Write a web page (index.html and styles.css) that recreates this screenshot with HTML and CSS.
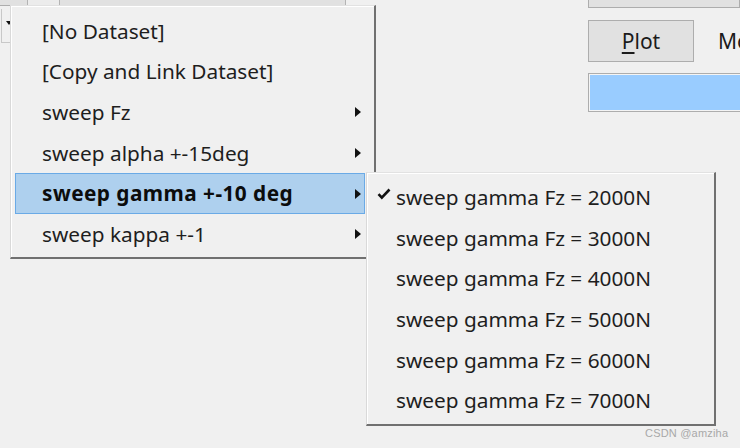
FILE: index.html
```html
<!DOCTYPE html>
<html>
<head>
<meta charset="utf-8">
<link rel="stylesheet" href="styles.css">
</head>
<body>
<div class="app">
  <div class="left">
    <div class="topbar">
      <div class="seg seg1"></div>
      <div class="seg seg2"></div>
      <div class="seg seg3"></div>
    </div>
    <div class="combo"><span class="combo-arrow"></span></div>
  </div>
  <div class="right">
    <div class="btn-top"></div>
    <div class="plot-row">
      <div class="btn plot"><span class="ul">P</span>lot</div>
      <span class="mo">Mo</span>
    </div>
    <div class="bluebar"></div>
  </div>
</div>

<div class="menu main-menu">
  <div class="item">[No Dataset]</div>
  <div class="item">[Copy and Link Dataset]</div>
  <div class="item sub">sweep Fz<span class="arrow"></span></div>
  <div class="item sub">sweep alpha +-15deg<span class="arrow"></span></div>
  <div class="item sub active">sweep gamma +-10 deg<span class="arrow"></span></div>
  <div class="item sub">sweep kappa +-1<span class="arrow"></span></div>
</div>

<div class="menu sub-menu">
  <div class="item checked"><svg class="check" width="14" height="12" viewBox="0 0 14 12"><path d="M1.5 6.2 L4.8 9.6 L12.5 1.5" fill="none" stroke="#111" stroke-width="2.6" stroke-linejoin="miter" stroke-linecap="butt"/></svg>sweep gamma Fz = 2000N</div>
  <div class="item">sweep gamma Fz = 3000N</div>
  <div class="item">sweep gamma Fz = 4000N</div>
  <div class="item">sweep gamma Fz = 5000N</div>
  <div class="item">sweep gamma Fz = 6000N</div>
  <div class="item">sweep gamma Fz = 7000N</div>
</div>

<div class="watermark">CSDN @amziha</div>
</body>
</html>
```

FILE: styles.css
```css
html, body {
  margin: 0;
  padding: 0;
}
body {
  width: 740px;
  height: 448px;
  overflow: hidden;
  background: #f0f0f0;
  font-family: "Noto Sans", "Open Sans", sans-serif;
  position: relative;
  color: #1b1b1b;
}
.app {
  display: flex;
  height: 448px;
}
.left {
  width: 588px;
  flex-shrink: 0;
  display: flex;
  flex-direction: column;
}
.topbar {
  display: flex;
  height: 6px;
}
.seg {
  box-sizing: border-box;
  height: 6px;
  border-bottom: 1px solid #adadad;
}
.seg1 {
  width: 28px;
  background: #e1e1e1;
  border-right: 1px solid #b4b4b4;
}
.seg2 {
  width: 32px;
  background: #ececec;
  border-right: 1px solid #b4b4b4;
}
.seg3 {
  width: 286px;
  background: #e1e1e1;
  border-right: 1px solid #b4b4b4;
}
.combo {
  margin-top: 3px;
  width: 10px;
  height: 34px;
  box-sizing: border-box;
  border-left: 1px solid #c8c8c8;
  border-bottom: 1px solid #c8c8c8;
  margin-left: 1px;
  position: relative;
}
.combo-arrow {
  position: absolute;
  left: 4px;
  top: 12px;
  width: 0;
  height: 0;
  border-left: 3px solid transparent;
  border-right: 3px solid transparent;
  border-top: 4px solid #111;
}
.right {
  width: 152px;
  flex-shrink: 0;
  overflow: hidden;
  display: flex;
  flex-direction: column;
}
.btn-top {
  height: 8px;
  box-sizing: border-box;
  background: #e1e1e1;
  border: 1px solid #adadad;
  border-top: none;
}
.plot-row {
  margin-top: 12px;
  display: flex;
  align-items: center;
  gap: 24px;
  height: 42px;
}
.btn {
  box-sizing: border-box;
  background: #e1e1e1;
  border: 1px solid #adadad;
  display: flex;
  align-items: center;
  justify-content: center;
  font-size: 21px;
  color: #1b1b1b;
}
.plot {
  width: 106px;
  height: 42px;
  flex-shrink: 0;
}
.ul {
  text-decoration: underline;
  text-underline-offset: 3px;
}
.mo {
  font-size: 21px;
  white-space: nowrap;
  flex-shrink: 0;
}
.bluebar {
  margin-top: 11px;
  height: 39px;
  box-sizing: border-box;
  background: #99ccff;
  border: 1px solid #adadad;
  border-right: none;
  box-shadow: inset 1px 1px 0 #f4f4f4, inset 0 -1px 0 #f4f4f4;
}
.menu {
  position: absolute;
  box-sizing: border-box;
  background: #f0f0f0;
  border-top: 1px solid #e2e2e2;
  border-left: 1px solid #d9d9d9;
  border-right: 2px solid #707070;
  border-bottom: 2px solid #707070;
  box-shadow: inset 1px 1px 0 #ffffff;
  display: flex;
  flex-direction: column;
}
.main-menu {
  left: 10px;
  top: 5px;
  width: 366px;
  height: 254px;
  padding: 5px 0 0 4px;
}
.sub-menu {
  left: 366px;
  top: 172px;
  width: 350px;
  height: 254px;
  padding: 5px 0 0 0;
}
.item {
  position: relative;
  box-sizing: border-box;
  height: 40.6px;
  display: flex;
  align-items: center;
  font-size: 20.8px;
  white-space: nowrap;
  color: #1e1e1e;
}
.main-menu .item {
  width: 350px;
  padding-left: 27px;
  padding-bottom: 1px;
}
.sub-menu .item {
  padding-left: 29px;
  padding-bottom: 2px;
}
.item.active {
  background: #aed0ee;
  border: 1px solid #6aaae6;
  padding-left: 26px;
  font-weight: bold;
  letter-spacing: 0.45px;
  color: #0c0c0c;
}
.arrow {
  position: absolute;
  right: 4px;
  top: 50%;
  margin-top: -5px;
  width: 0;
  height: 0;
  border-top: 5px solid transparent;
  border-bottom: 5px solid transparent;
  border-left: 6px solid #111;
}
.item.active .arrow {
  right: 3px;
}
.check {
  position: absolute;
  left: 10px;
  top: 10px;
}
.watermark {
  position: absolute;
  left: 645px;
  top: 427px;
  font-family: "Liberation Sans", Arial, sans-serif;
  font-size: 11px;
  color: #a8a8a8;
  letter-spacing: 0.2px;
}
```
